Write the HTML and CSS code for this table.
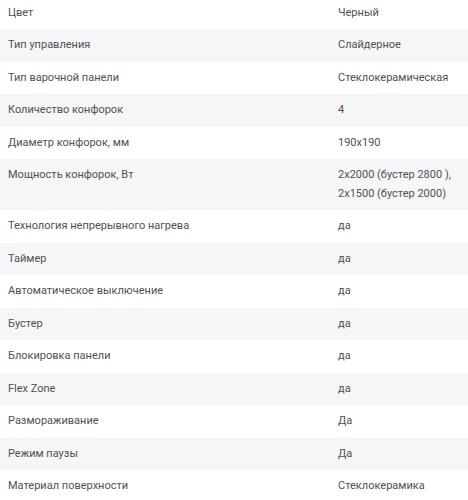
FILE: index.html
```html
<!DOCTYPE html>
<html lang="ru">
<head>
<meta charset="utf-8">
<link rel="stylesheet" href="styles.css">
</head>
<body>
<div class="specs">
  <div class="row"><div class="name">Цвет</div><div class="value">Черный</div></div>
  <div class="row"><div class="name">Тип управления</div><div class="value">Слайдерное</div></div>
  <div class="row"><div class="name">Тип варочной панели</div><div class="value">Стеклокерамическая</div></div>
  <div class="row"><div class="name">Количество конфорок</div><div class="value">4</div></div>
  <div class="row"><div class="name">Диаметр конфорок, мм</div><div class="value">190x190</div></div>
  <div class="row"><div class="name">Мощность конфорок, Вт</div><div class="value">2x2000 (бустер 2800 ),<br>2x1500 (бустер 2000)</div></div>
  <div class="row"><div class="name">Технология непрерывного нагрева</div><div class="value">да</div></div>
  <div class="row"><div class="name">Таймер</div><div class="value">да</div></div>
  <div class="row"><div class="name">Автоматическое выключение</div><div class="value">да</div></div>
  <div class="row"><div class="name">Бустер</div><div class="value">да</div></div>
  <div class="row"><div class="name">Блокировка панели</div><div class="value">да</div></div>
  <div class="row"><div class="name">Flex Zone</div><div class="value">да</div></div>
  <div class="row"><div class="name">Размораживание</div><div class="value">Да</div></div>
  <div class="row"><div class="name">Режим паузы</div><div class="value">Да</div></div>
  <div class="row"><div class="name">Материал поверхности</div><div class="value">Стеклокерамика</div></div>
</div>
</body>
</html>
```
FILE: styles.css
```css
html, body {
  margin: 0;
  padding: 0;
  background: #ffffff;
}
body {
  font-family: Roboto, "Noto Sans", sans-serif;
  font-size: 11px;
  color: #505050;
}
.specs {
  margin-top: -3.5px;
  display: flex;
  flex-direction: column;
}
.row {
  display: grid;
  grid-template-columns: 330px 1fr;
  padding: 7px 0;
  line-height: 18.5px;
}
.row:nth-child(even) {
  background: #f5f6f8;
}
.name {
  padding-left: 8px;
}
.value {
  padding-left: 8px;
  white-space: nowrap;
}
```
